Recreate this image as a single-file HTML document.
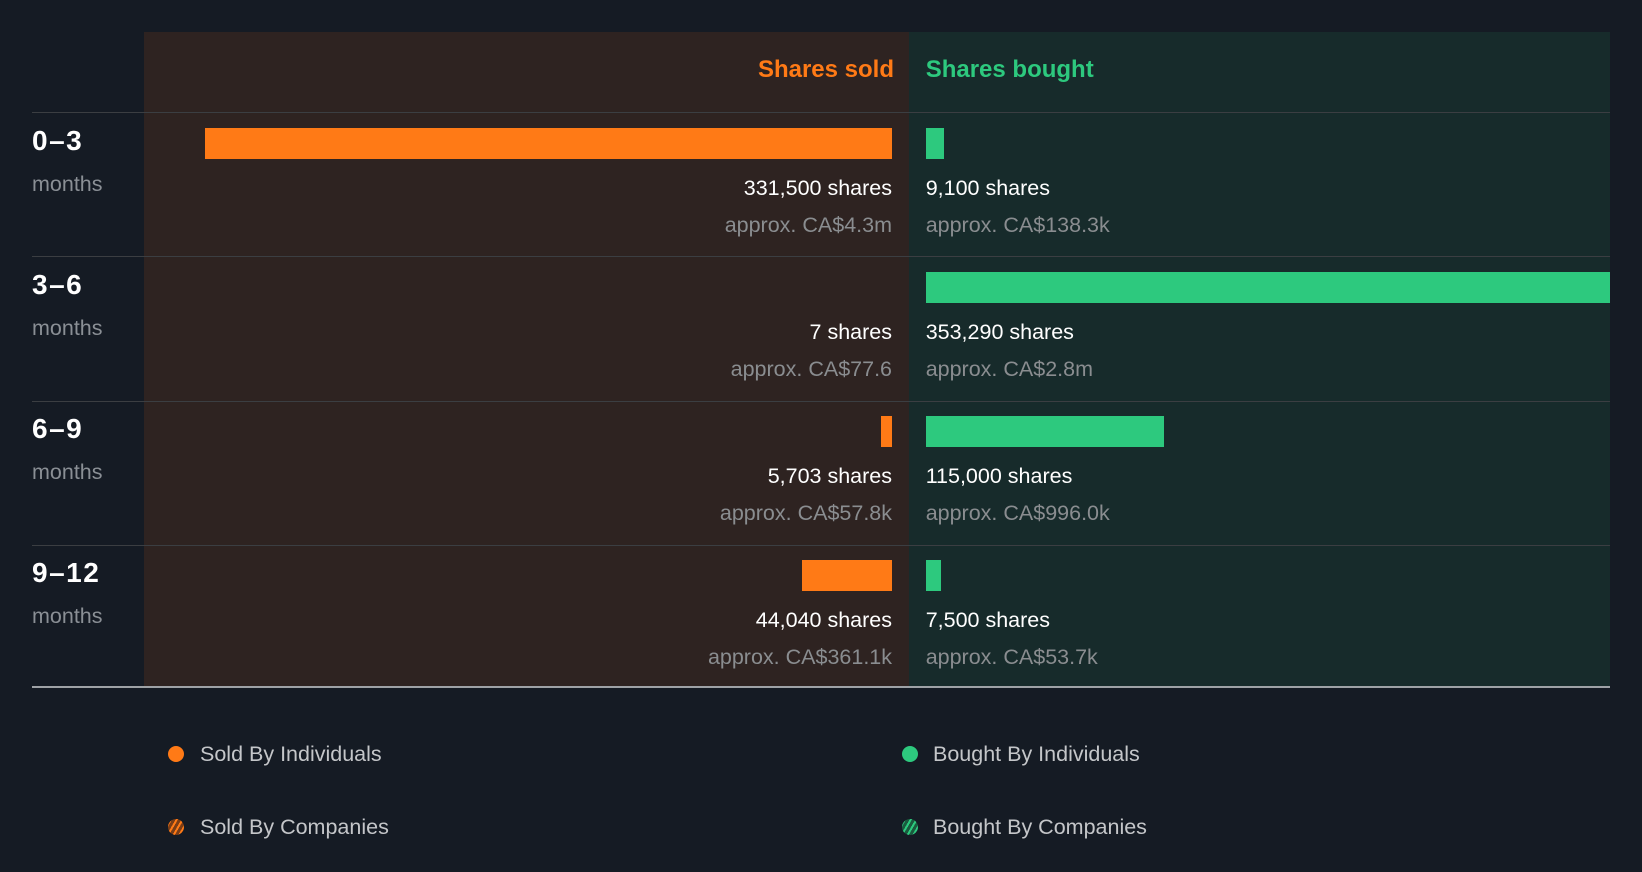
<!DOCTYPE html>
<html><head><meta charset="utf-8"><style>
*{margin:0;padding:0;box-sizing:border-box}
body{width:1642px;height:872px;background:#151b24;font-family:"Liberation Sans",sans-serif;position:relative;overflow:hidden}
.a{position:absolute}
.sp{left:143.5px;width:765.5px;top:32px;height:655px;background:#2e2321}
.bp{left:909px;width:700.5px;top:32px;height:655px;background:#172b2b}
.ln{left:32px;width:1577.5px;height:1px;background:#3b3e42}
.h{top:56px;font-size:24px;font-weight:bold;line-height:28px}
.lab{left:32px;font-size:28px;font-weight:bold;color:#fff;line-height:32px;letter-spacing:1.5px}
.mo{left:32px;font-size:21.5px;color:#8a8f95;line-height:24px}
.s{font-size:21.5px;color:#fff;line-height:24px;white-space:nowrap}
.ap{font-size:21.5px;color:#8a8d90;line-height:24px;white-space:nowrap}
.r{right:750px;text-align:right}
.l{left:925.7px}
.o{background:#ff7a16;height:31px}
.g{background:#2dc97e;height:31px}
.lg{font-size:21.5px;color:#c4c6c9;line-height:24px}
.dot{width:16px;height:16px;border-radius:50%}
</style></head><body>
<div class="a sp"></div><div class="a bp"></div>
<div class="a h" style="right:748px;color:#ff7a16">Shares sold</div>
<div class="a h" style="left:925.7px;color:#2dc97e">Shares bought</div>
<div class="a ln" style="top:112px"></div>
<div class="a ln" style="top:256px"></div>
<div class="a ln" style="top:400.5px"></div>
<div class="a ln" style="top:544.5px"></div>
<div class="a ln" style="top:686px;height:2px;background:#9ea2a6"></div>

<!-- row1 -->
<div class="a lab" style="top:125px">0–3</div><div class="a mo" style="top:172px">months</div>
<div class="a o" style="left:205px;width:687px;top:128px"></div>
<div class="a g" style="left:925.7px;width:18px;top:128px"></div>
<div class="a s r" style="top:176px">331,500 shares</div>
<div class="a ap r" style="top:213px">approx. CA$4.3m</div>
<div class="a s l" style="top:176px">9,100 shares</div>
<div class="a ap l" style="top:213px">approx. CA$138.3k</div>
<!-- row2 -->
<div class="a lab" style="top:269px">3–6</div><div class="a mo" style="top:316px">months</div>
<div class="a g" style="left:925.7px;width:684px;top:272px"></div>
<div class="a s r" style="top:320px">7 shares</div>
<div class="a ap r" style="top:357px">approx. CA$77.6</div>
<div class="a s l" style="top:320px">353,290 shares</div>
<div class="a ap l" style="top:357px">approx. CA$2.8m</div>
<!-- row3 -->
<div class="a lab" style="top:413px">6–9</div><div class="a mo" style="top:460px">months</div>
<div class="a o" style="left:881px;width:11px;top:416px"></div>
<div class="a g" style="left:925.7px;width:238px;top:416px"></div>
<div class="a s r" style="top:464px">5,703 shares</div>
<div class="a ap r" style="top:501px">approx. CA$57.8k</div>
<div class="a s l" style="top:464px">115,000 shares</div>
<div class="a ap l" style="top:501px">approx. CA$996.0k</div>
<!-- row4 -->
<div class="a lab" style="top:557px">9–12</div><div class="a mo" style="top:604px">months</div>
<div class="a o" style="left:802px;width:90px;top:560px"></div>
<div class="a g" style="left:925.7px;width:15px;top:560px"></div>
<div class="a s r" style="top:608px">44,040 shares</div>
<div class="a ap r" style="top:645px">approx. CA$361.1k</div>
<div class="a s l" style="top:608px">7,500 shares</div>
<div class="a ap l" style="top:645px">approx. CA$53.7k</div>

<!-- legend -->
<div class="a dot" style="left:168px;top:746px;background:#ff7a16"></div>
<div class="a lg" style="left:200px;top:742px">Sold By Individuals</div>
<div class="a dot" style="left:168px;top:819px;background:repeating-linear-gradient(-60deg,#7a3d16 0 3px,#ff7a16 3px 5px)"></div>
<div class="a lg" style="left:200px;top:815px">Sold By Companies</div>
<div class="a dot" style="left:902px;top:746px;background:#2dc97e"></div>
<div class="a lg" style="left:933px;top:742px">Bought By Individuals</div>
<div class="a dot" style="left:902px;top:819px;background:repeating-linear-gradient(-60deg,#1a5a3e 0 3px,#2dc97e 3px 5px)"></div>
<div class="a lg" style="left:933px;top:815px">Bought By Companies</div>
</body></html>
